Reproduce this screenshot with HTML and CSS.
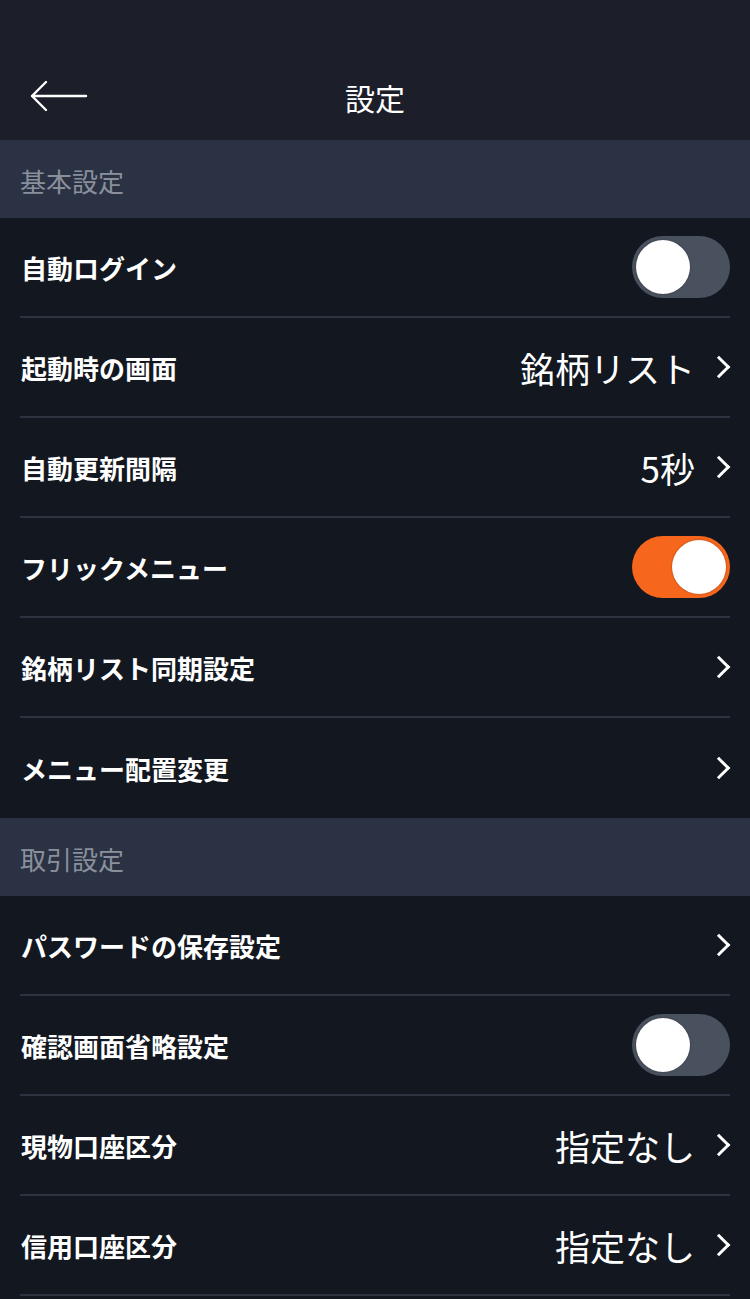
FILE: index.html
```html
<!DOCTYPE html>
<html lang="ja">
<head>
  <meta charset="UTF-8">
  <meta name="viewport" content="width=device-width, initial-scale=1.0">
  <title>設定</title>
  <link rel="stylesheet" href="styles.css">
</head>
<body>
  <header class="topbar">
    <svg class="back" width="60" height="34" viewBox="0 0 60 34">
      <path d="M58 17 H4 M18 3 L4 17 L18 31" fill="none" stroke="#ffffff" stroke-width="2.4" stroke-linecap="round" stroke-linejoin="round"/>
    </svg>
    <h1 class="title">設定</h1>
  </header>

  <div class="section">基本設定</div>
  <ul class="list">
    <li class="row"><span class="label">自動ログイン</span><span class="toggle"><span class="knob"></span></span></li>
    <li class="row"><span class="label">起動時の画面</span><span class="value">銘柄リスト</span><span class="chev"></span></li>
    <li class="row"><span class="label">自動更新間隔</span><span class="value">5秒</span><span class="chev"></span></li>
    <li class="row"><span class="label">フリックメニュー</span><span class="toggle on"><span class="knob"></span></span></li>
    <li class="row"><span class="label">銘柄リスト同期設定</span><span class="chev"></span></li>
    <li class="row last"><span class="label">メニュー配置変更</span><span class="chev"></span></li>
  </ul>

  <div class="section">取引設定</div>
  <ul class="list">
    <li class="row"><span class="label">パスワードの保存設定</span><span class="chev"></span></li>
    <li class="row"><span class="label">確認画面省略設定</span><span class="toggle"><span class="knob"></span></span></li>
    <li class="row"><span class="label">現物口座区分</span><span class="value">指定なし</span><span class="chev"></span></li>
    <li class="row"><span class="label">信用口座区分</span><span class="value">指定なし</span><span class="chev"></span></li>
  </ul>
</body>
</html>
```

FILE: styles.css
```css
body {
    margin: 0;
    background-color: #121720;
    color: #ffffff;
    font-family: "Noto Sans CJK JP", "Noto Sans", sans-serif;
}

.topbar {
    height: 140px;
    background-color: #1c1f2a;
    position: relative;
    display: flex;
    align-items: center;
    justify-content: center;
    padding-top: 54px;
    box-sizing: border-box;
}

.back {
    position: absolute;
    left: 28px;
    top: 79px;
}

.title {
    margin: 0;
    font-size: 30px;
    font-weight: 400;
    line-height: 1;
}

.section {
    height: 78px;
    background-color: #2a3244;
    color: #8a909b;
    font-size: 26px;
    line-height: 78px;
    padding-left: 20px;
    padding-top: 2px;
    box-sizing: border-box;
}

.list {
    list-style: none;
    margin: 0;
    padding: 0 20px;
}

.row {
    height: 100px;
    display: flex;
    align-items: center;
    border-bottom: 2px solid #2d3340;
    box-sizing: border-box;
}

.row.last {
    border-bottom: none;
}

.label {
    flex: 1;
    font-size: 26px;
    font-weight: 700;
    padding-left: 1px;
}

.value {
    font-size: 35px;
    font-weight: 400;
    margin-right: 16px;
}

.chev {
    width: 13px;
    height: 13px;
    border-top: 3px solid #ffffff;
    border-right: 3px solid #ffffff;
    transform: rotate(45deg);
    margin-right: 3px;
}

.toggle {
    width: 98px;
    height: 62px;
    border-radius: 31px;
    background-color: #4a515e;
    display: flex;
    align-items: center;
    padding: 0 4px;
    box-sizing: border-box;
}

.toggle.on {
    background-color: #f6661c;
    justify-content: flex-end;
}

.knob {
    width: 54px;
    height: 54px;
    border-radius: 50%;
    background-color: #ffffff;
    box-shadow: 0 0 2px rgba(0, 0, 0, 0.4);
}
```
